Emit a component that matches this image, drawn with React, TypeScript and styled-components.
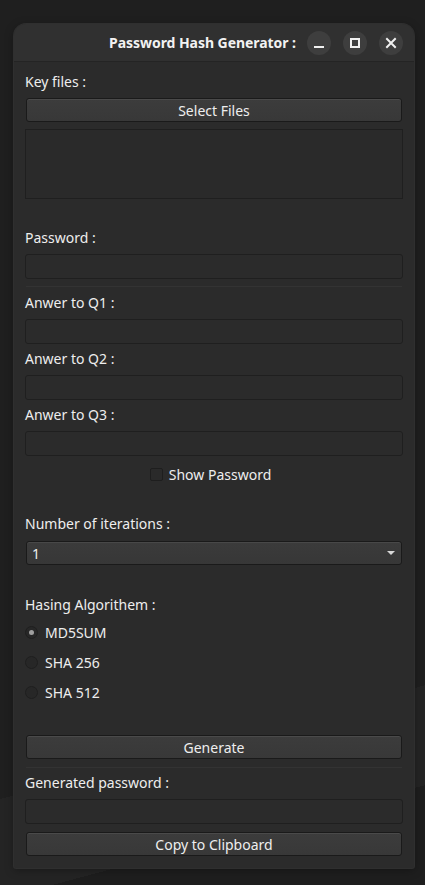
import React from "react";
import styled, { createGlobalStyle } from "styled-components";

const Global = createGlobalStyle`
  html, body { margin: 0; padding: 0; }
  body {
    width: 425px;
    height: 885px;
    overflow: hidden;
    background:
      linear-gradient(165deg, transparent 0 80%, #242424 80% 90%, #1e1e1e 90%),
      #1f1f1f;
    font-family: "Noto Sans", "Open Sans", sans-serif;
    color: #eeeeee;
  }
`;

const Page = styled.div`
  padding: 24px 11px 0 14px;
`;

const Window = styled.div`
  width: 400px;
  background: #2b2b2b;
  border-radius: 12px 12px 2px 2px;
  box-shadow: 0 0 0 1px #2f2f2f, 0 2px 10px rgba(0,0,0,0.35);
  overflow: hidden;
`;

const Header = styled.div`
  height: 37px;
  background: #303030;
  border-bottom: 1px solid #242424;
  display: flex;
  align-items: center;
  justify-content: flex-end;
  padding-right: 11px;
  gap: 12px;
`;

const Title = styled.div`
  font-weight: 700;
  font-size: 14px;
  color: #f2f2f2;
  margin-right: -1px;
  letter-spacing: -0.05px;
`;

const CircleBtn = styled.div`
  width: 24px;
  height: 24px;
  border-radius: 50%;
  background: #3e3e3e;
  display: flex;
  align-items: center;
  justify-content: center;
`;

const Body = styled.div`
  display: flex;
  flex-direction: column;
  padding: 0 11px 12px 11px;
`;

const Label = styled.div<{ $mt: number }>`
  margin-top: ${(p) => p.$mt}px;
  height: 18px;
  line-height: 18px;
  font-size: 14px;
  color: #eeeeee;
`;

const Button = styled.div<{ $mt: number }>`
  margin: ${(p) => p.$mt}px 1px 0 1px;
  height: 22px;
  border: 1px solid #1a1a1a;
  border-radius: 3px;
  background: linear-gradient(#3c3c3c, #383838);
  box-shadow: inset 0 1px 0 #4a4a4a;
  display: flex;
  align-items: center;
  justify-content: center;
  font-size: 14px;
  color: #eeeeee;
`;

const Input = styled.div<{ $mt: number }>`
  margin-top: ${(p) => p.$mt}px;
  height: 23px;
  border: 1px solid #1f1f1f;
  border-radius: 3px;
  background: #2b2b2b;
`;

const ListBox = styled.div<{ $mt: number }>`
  margin-top: ${(p) => p.$mt}px;
  height: 68px;
  border: 1px solid #1f1f1f;
  background: #2a2a2a;
`;

const Separator = styled.div<{ $mt: number }>`
  margin: ${(p) => p.$mt}px 1px 0 1px;
  height: 1px;
  background: #333333;
`;

const CheckRow = styled.div<{ $mt: number }>`
  margin-top: ${(p) => p.$mt}px;
  height: 18px;
  display: flex;
  align-items: center;
  justify-content: center;
  gap: 6px;
  font-size: 14px;
  padding-right: 7px;
`;

const CheckBox = styled.div`
  width: 11px;
  height: 11px;
  border: 1px solid #1e1e1e;
  border-radius: 2px;
  background: #2a2a2a;
`;

const Combo = styled.div<{ $mt: number }>`
  margin: ${(p) => p.$mt}px 1px 0 1px;
  height: 22px;
  border: 1px solid #1a1a1a;
  border-radius: 3px;
  background: linear-gradient(#3b3b3b, #373737);
  box-shadow: inset 0 1px 0 #484848;
  display: flex;
  align-items: center;
  justify-content: space-between;
  padding: 0 6px 0 5px;
  font-size: 14px;
`;

const Arrow = styled.div`
  width: 0;
  height: 0;
  border-left: 4px solid transparent;
  border-right: 4px solid transparent;
  border-top: 4px solid #d8d8d8;
`;

const RadioRow = styled.div<{ $mt: number }>`
  margin-top: ${(p) => p.$mt}px;
  height: 18px;
  display: flex;
  align-items: center;
  gap: 7px;
  font-size: 14px;
`;

const Radio = styled.div<{ $checked?: boolean }>`
  width: 11px;
  height: 11px;
  border-radius: 50%;
  border: 1px solid #1f1f1f;
  background: #272727;
  display: flex;
  align-items: center;
  justify-content: center;
  &::after {
    content: "";
    width: 5px;
    height: 5px;
    border-radius: 50%;
    background: ${(p) => (p.$checked ? "#a0a0a0" : "transparent")};
  }
`;

export default function App() {
  return (
    <>
      <Global />
      <Page>
        <Window>
          <Header>
            <Title>Password Hash Generator :</Title>
            <CircleBtn>
              <svg width="12" height="12" viewBox="0 0 12 12">
                <rect x="1" y="9" width="10" height="2" fill="#f0f0f0" />
              </svg>
            </CircleBtn>
            <CircleBtn>
              <svg width="12" height="12" viewBox="0 0 12 12">
                <rect x="2" y="2" width="8" height="8" fill="none" stroke="#f0f0f0" strokeWidth="2" />
              </svg>
            </CircleBtn>
            <CircleBtn>
              <svg width="12" height="12" viewBox="0 0 12 12">
                <path d="M2 2 L10 10 M10 2 L2 10" stroke="#f0f0f0" strokeWidth="2" strokeLinecap="square" />
              </svg>
            </CircleBtn>
          </Header>
          <Body>
            <Label $mt={11}>Key files :</Label>
            <Button $mt={7}>Select Files</Button>
            <ListBox $mt={7} />
            <Label $mt={30}>Password :</Label>
            <Input $mt={7} />
            <Separator $mt={7} />
            <Label $mt={7}>Anwer to Q1 :</Label>
            <Input $mt={7} />
            <Label $mt={6}>Anwer to Q2 :</Label>
            <Input $mt={7} />
            <Label $mt={6}>Anwer to Q3 :</Label>
            <Input $mt={7} />
            <CheckRow $mt={9}>
              <CheckBox />
              <span>Show Password</span>
            </CheckRow>
            <Label $mt={32}>Number of iterations :</Label>
            <Combo $mt={8}>
              <span>1</span>
              <Arrow />
            </Combo>
            <Label $mt={31}>Hasing Algorithem :</Label>
            <RadioRow $mt={9}>
              <Radio $checked />
              <span>MD5SUM</span>
            </RadioRow>
            <RadioRow $mt={12}>
              <Radio />
              <span>SHA 256</span>
            </RadioRow>
            <RadioRow $mt={12}>
              <Radio />
              <span>SHA 512</span>
            </RadioRow>
            <Button $mt={34}>Generate</Button>
            <Separator $mt={8} />
            <Label $mt={6}>Generated password :</Label>
            <Input $mt={7} />
            <Button $mt={8}>Copy to Clipboard</Button>
          </Body>
        </Window>
      </Page>
    </>
  );
}
